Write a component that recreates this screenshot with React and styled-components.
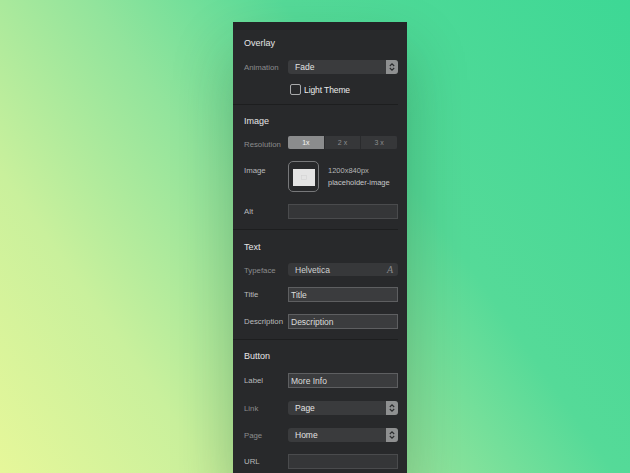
import React from 'react'
import styled, { createGlobalStyle } from 'styled-components'

const Global = createGlobalStyle`
  html, body { margin:0; padding:0; height:100%; overflow:hidden; }
  body {
    font-family: "Liberation Sans", Arial, sans-serif;
    background: linear-gradient(55deg, #e6f79a 0%, #c9f09c 22%, #92e49c 44%, #55da98 64%, #3dd895 100%);
  }
  #root { height:473px; }
`

const Stage = styled.div`
  height: 473px;
  padding-top: 22px;
  box-sizing: border-box;
`

const Panel = styled.div`
  width: 174px;
  margin-left: 233px;
  height: 460px;
  background: #28292b;
  box-shadow: 0 30px 60px rgba(20, 60, 30, 0.28);
`

const TopStrip = styled.div`
  height: 8px;
  background: #232426;
`

const Section = styled.div`
  padding: ${p => p.pt}px 0 ${p => p.pb}px 11px;
  margin-right: 9px;
  border-bottom: ${p => (p.last ? 'none' : '1px solid #1d1e1f')};
`

const Heading = styled.div`
  height: 12px;
  line-height: 12px;
  font-size: 9px;
  color: #e6e6e6;
`

const Row = styled.div`
  display: flex;
  align-items: ${p => p.align || 'center'};
  margin-top: ${p => p.mt}px;
  height: ${p => p.h}px;
`

const Label = styled.div`
  width: 44px;
  flex: none;
  font-size: 7.8px;
  white-space: nowrap;
  color: ${p => (p.dim ? '#8b8c8d' : '#b9babb')};
  padding-top: ${p => p.pt || 0}px;
`

const Control = styled.div`
  width: 110px;
  height: 100%;
  display: flex;
  align-items: center;
`

const SelectBox = styled.div`
  width: 110px;
  height: 14px;
  display: flex;
  border-radius: 3px;
  background: #3a3b3d;
  overflow: hidden;
`

const SelectText = styled.div`
  flex: 1;
  padding-left: 7px;
  font-size: 8.5px;
  line-height: 15px;
  color: #e2e2e2;
`

const Arrow = styled.div`
  width: 12px;
  background: #8f9091;
  display: flex;
  align-items: center;
  justify-content: center;
`

const Input = styled.div`
  width: 110px;
  height: 15px;
  box-sizing: border-box;
  border: 1px solid ${p => (p.empty ? '#4a4b4d' : '#5e5f61')};
  background: ${p => (p.empty ? '#353638' : '#3b3c3e')};
  font-size: 8.5px;
  line-height: 14px;
  padding-left: 2px;
  color: #dcdcdc;
`

const Check = styled.div`
  width: 9px;
  height: 9px;
  border: 1px solid #a9aaab;
  border-radius: 2px;
  margin-left: 2px;
  margin-right: 3px;
`

const CheckText = styled.div`
  font-size: 8.5px;
  color: #ececec;
  letter-spacing: -0.1px;
`

const Segmented = styled.div`
  width: 109px;
  height: 13px;
  display: flex;
  border-radius: 2px;
  overflow: hidden;
  background: #353638;
`

const Segment = styled.div`
  flex: 1;
  text-align: center;
  font-size: 7px;
  line-height: 13px;
  color: ${p => (p.active ? '#f4f4f4' : '#8c8d8e')};
  background: ${p => (p.active ? '#8b8c8d' : '#363739')};
  border-left: ${p => (p.first ? 'none' : '1px solid #2a2b2d')};
`

const Thumb = styled.div`
  width: 31px;
  height: 31px;
  box-sizing: border-box;
  border: 1.5px solid #77787a;
  border-radius: 5px;
  display: flex;
  align-items: center;
  justify-content: center;
  flex: none;
`

const ThumbImg = styled.div`
  width: 22px;
  height: 17px;
  margin-top: 2px;
  background: #e4e4e4;
  display: flex;
  align-items: center;
  justify-content: center;
`

const ImageInfo = styled.div`
  margin-left: 9px;
  font-size: 7.5px;
  line-height: 12px;
  color: #b4b5b6;
  margin-top: 4px;
`

const FontField = styled.div`
  width: 110px;
  height: 13px;
  border-radius: 3px;
  background: #37383a;
  display: flex;
  align-items: center;
  justify-content: space-between;
  padding: 0 5px 0 7px;
  box-sizing: border-box;
  font-size: 8.5px;
  color: #cfd0d1;
`

const FontIcon = styled.span`
  font-family: "Liberation Serif", serif;
  font-style: italic;
  font-size: 10px;
  color: #8a8b8c;
`

const Chevrons = () => (
  <svg width="8" height="10" viewBox="0 0 8 10">
    <path d="M1.8 4 L4 1.8 L6.2 4" fill="none" stroke="#2b2c2e" strokeWidth="1.1" />
    <path d="M1.8 6 L4 8.2 L6.2 6" fill="none" stroke="#2b2c2e" strokeWidth="1.1" />
  </svg>
)

const Select = ({ value }) => (
  <SelectBox>
    <SelectText>{value}</SelectText>
    <Arrow><Chevrons /></Arrow>
  </SelectBox>
)

const App = () => (
  <Stage>
    <Global />
    <Panel>
      <TopStrip />

      <Section pt={7} pb={9}>
        <Heading>Overlay</Heading>
        <Row mt={11} h={14}>
          <Label dim>Animation</Label>
          <Control><Select value="Fade" /></Control>
        </Row>
        <Row mt={10} h={11}>
          <Label />
          <Check />
          <CheckText>Light Theme</CheckText>
        </Row>
      </Section>

      <Section pt={10} pb={10}>
        <Heading>Image</Heading>
        <Row mt={9} h={13}>
          <Label dim pt={4}>Resolution</Label>
          <Segmented>
            <Segment first active>1x</Segment>
            <Segment>2 x</Segment>
            <Segment>3 x</Segment>
          </Segmented>
        </Row>
        <Row mt={12} h={31} align="flex-start">
          <Label pt={5}>Image</Label>
          <Thumb>
            <ThumbImg>
              <svg width="6" height="5" viewBox="0 0 6 5">
                <rect x="0.5" y="0.5" width="5" height="4" fill="none" stroke="#d2d2d2" strokeWidth="0.6" />
              </svg>
            </ThumbImg>
          </Thumb>
          <ImageInfo>
            <div>1200x840px</div>
            <div style={{ color: '#c6c7c8' }}>placeholder-image</div>
          </ImageInfo>
        </Row>
        <Row mt={12} h={15}>
          <Label>Alt</Label>
          <Input empty />
        </Row>
      </Section>

      <Section pt={11} pb={10}>
        <Heading>Text</Heading>
        <Row mt={10} h={13}>
          <Label dim pt={1}>Typeface</Label>
          <FontField>
            <span>Helvetica</span>
            <FontIcon>A</FontIcon>
          </FontField>
        </Row>
        <Row mt={11} h={15}>
          <Label>Title</Label>
          <Input>Title</Input>
        </Row>
        <Row mt={12} h={15}>
          <Label>Description</Label>
          <Input>Description</Input>
        </Row>
      </Section>

      <Section pt={10} pb={0} last>
        <Heading>Button</Heading>
        <Row mt={11} h={15}>
          <Label>Label</Label>
          <Input>More Info</Input>
        </Row>
        <Row mt={13} h={14}>
          <Label dim>Link</Label>
          <Control><Select value="Page" /></Control>
        </Row>
        <Row mt={13} h={14}>
          <Label dim>Page</Label>
          <Control><Select value="Home" /></Control>
        </Row>
        <Row mt={12} h={15}>
          <Label>URL</Label>
          <Input empty />
        </Row>
      </Section>
    </Panel>
  </Stage>
)

export default App
